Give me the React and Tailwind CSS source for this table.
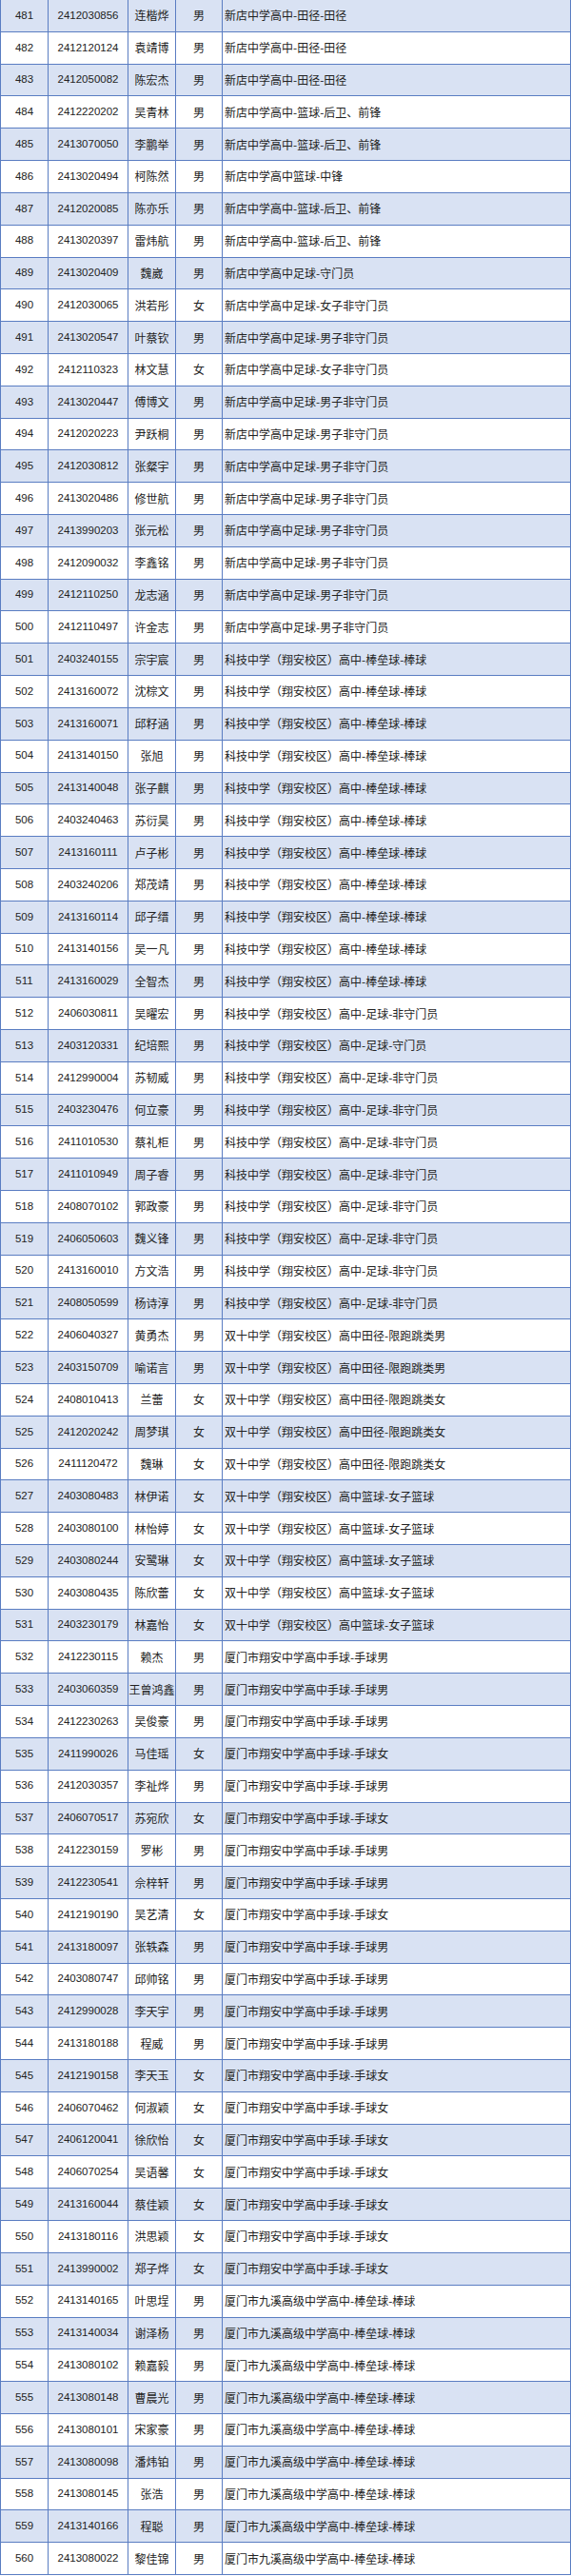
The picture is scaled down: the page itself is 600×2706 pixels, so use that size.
import React from 'react';

const raw = `481|2412030856|连楷烨|男|新店中学高中-田径-田径
482|2412120124|袁靖博|男|新店中学高中-田径-田径
483|2412050082|陈宏杰|男|新店中学高中-田径-田径
484|2412220202|吴青林|男|新店中学高中-篮球-后卫、前锋
485|2413070050|李鹏举|男|新店中学高中-篮球-后卫、前锋
486|2413020494|柯陈然|男|新店中学高中篮球-中锋
487|2412020085|陈亦乐|男|新店中学高中-篮球-后卫、前锋
488|2413020397|雷炜航|男|新店中学高中-篮球-后卫、前锋
489|2413020409|魏崴|男|新店中学高中足球-守门员
490|2412030065|洪若彤|女|新店中学高中足球-女子非守门员
491|2413020547|叶蔡钦|男|新店中学高中足球-男子非守门员
492|2412110323|林文慧|女|新店中学高中足球-女子非守门员
493|2413020447|傅博文|男|新店中学高中足球-男子非守门员
494|2412020223|尹跃桐|男|新店中学高中足球-男子非守门员
495|2412030812|张粲宇|男|新店中学高中足球-男子非守门员
496|2413020486|修世航|男|新店中学高中足球-男子非守门员
497|2413990203|张元松|男|新店中学高中足球-男子非守门员
498|2412090032|李鑫铭|男|新店中学高中足球-男子非守门员
499|2412110250|龙志涵|男|新店中学高中足球-男子非守门员
500|2412110497|许金志|男|新店中学高中足球-男子非守门员
501|2403240155|宗宇宸|男|科技中学（翔安校区）高中-棒垒球-棒球
502|2413160072|沈棕文|男|科技中学（翔安校区）高中-棒垒球-棒球
503|2413160071|邱籽涵|男|科技中学（翔安校区）高中-棒垒球-棒球
504|2413140150|张旭|男|科技中学（翔安校区）高中-棒垒球-棒球
505|2413140048|张子麒|男|科技中学（翔安校区）高中-棒垒球-棒球
506|2403240463|苏衍昊|男|科技中学（翔安校区）高中-棒垒球-棒球
507|2413160111|卢子彬|男|科技中学（翔安校区）高中-棒垒球-棒球
508|2403240206|郑茂靖|男|科技中学（翔安校区）高中-棒垒球-棒球
509|2413160114|邱子缙|男|科技中学（翔安校区）高中-棒垒球-棒球
510|2413140156|吴一凡|男|科技中学（翔安校区）高中-棒垒球-棒球
511|2413160029|全智杰|男|科技中学（翔安校区）高中-棒垒球-棒球
512|2406030811|吴曜宏|男|科技中学（翔安校区）高中-足球-非守门员
513|2403120331|纪培熙|男|科技中学（翔安校区）高中-足球-守门员
514|2412990004|苏韧威|男|科技中学（翔安校区）高中-足球-非守门员
515|2403230476|何立豪|男|科技中学（翔安校区）高中-足球-非守门员
516|2411010530|蔡礼柜|男|科技中学（翔安校区）高中-足球-非守门员
517|2411010949|周子睿|男|科技中学（翔安校区）高中-足球-非守门员
518|2408070102|郭政豪|男|科技中学（翔安校区）高中-足球-非守门员
519|2406050603|魏义锋|男|科技中学（翔安校区）高中-足球-非守门员
520|2413160010|方文浩|男|科技中学（翔安校区）高中-足球-非守门员
521|2408050599|杨诗淳|男|科技中学（翔安校区）高中-足球-非守门员
522|2406040327|黄勇杰|男|双十中学（翔安校区）高中田径-限跑跳类男
523|2403150709|喻诺言|男|双十中学（翔安校区）高中田径-限跑跳类男
524|2408010413|兰蕾|女|双十中学（翔安校区）高中田径-限跑跳类女
525|2412020242|周梦琪|女|双十中学（翔安校区）高中田径-限跑跳类女
526|2411120472|魏琳|女|双十中学（翔安校区）高中田径-限跑跳类女
527|2403080483|林伊诺|女|双十中学（翔安校区）高中篮球-女子篮球
528|2403080100|林怡婷|女|双十中学（翔安校区）高中篮球-女子篮球
529|2403080244|安鹭琳|女|双十中学（翔安校区）高中篮球-女子篮球
530|2403080435|陈欣蕾|女|双十中学（翔安校区）高中篮球-女子篮球
531|2403230179|林嘉怡|女|双十中学（翔安校区）高中篮球-女子篮球
532|2412230115|赖杰|男|厦门市翔安中学高中手球-手球男
533|2403060359|王曾鸿鑫|男|厦门市翔安中学高中手球-手球男
534|2412230263|吴俊豪|男|厦门市翔安中学高中手球-手球男
535|2411990026|马佳瑶|女|厦门市翔安中学高中手球-手球女
536|2412030357|李祉烨|男|厦门市翔安中学高中手球-手球男
537|2406070517|苏宛欣|女|厦门市翔安中学高中手球-手球女
538|2412230159|罗彬|男|厦门市翔安中学高中手球-手球男
539|2412230541|佘梓轩|男|厦门市翔安中学高中手球-手球男
540|2412190190|吴艺清|女|厦门市翔安中学高中手球-手球女
541|2413180097|张轶森|男|厦门市翔安中学高中手球-手球男
542|2403080747|邱帅铭|男|厦门市翔安中学高中手球-手球男
543|2412990028|李天宇|男|厦门市翔安中学高中手球-手球男
544|2413180188|程威|男|厦门市翔安中学高中手球-手球男
545|2412190158|李天玉|女|厦门市翔安中学高中手球-手球女
546|2406070462|何淑颖|女|厦门市翔安中学高中手球-手球女
547|2406120041|徐欣怡|女|厦门市翔安中学高中手球-手球女
548|2406070254|吴语馨|女|厦门市翔安中学高中手球-手球女
549|2413160044|蔡佳颖|女|厦门市翔安中学高中手球-手球女
550|2413180116|洪思颖|女|厦门市翔安中学高中手球-手球女
551|2413990002|郑子烨|女|厦门市翔安中学高中手球-手球女
552|2413140165|叶思埕|男|厦门市九溪高级中学高中-棒垒球-棒球
553|2413140034|谢泽杨|男|厦门市九溪高级中学高中-棒垒球-棒球
554|2413080102|赖嘉毅|男|厦门市九溪高级中学高中-棒垒球-棒球
555|2413080148|曹晨光|男|厦门市九溪高级中学高中-棒垒球-棒球
556|2413080101|宋家豪|男|厦门市九溪高级中学高中-棒垒球-棒球
557|2413080098|潘炜铂|男|厦门市九溪高级中学高中-棒垒球-棒球
558|2413080145|张浩|男|厦门市九溪高级中学高中-棒垒球-棒球
559|2413140166|程聪|男|厦门市九溪高级中学高中-棒垒球-棒球
560|2413080022|黎佳锦|男|厦门市九溪高级中学高中-棒垒球-棒球`;

const rows = raw.split('\n').map((line) => line.split('|'));

const cell = 'flex items-center border-r border-b border-[#5a7dc2]';
const num = "font-['Liberation_Sans',sans-serif] text-[11.5px]";

export default function App() {
  return (
    <div className="w-[600px] border-l border-[#5a7dc2] text-[#222] font-['Noto_Sans_CJK_SC',sans-serif] text-[12px]">
      {rows.map(([no, id, name, sex, item], i) => (
        <div
          key={no}
          className={`grid grid-cols-[50px_84px_50px_49px_1fr] h-[33.825px] ${i % 2 === 0 ? 'bg-[#d9e2f3]' : 'bg-white'}`}
        >
          <div className={`${cell} ${num} justify-center`}>{no}</div>
          <div className={`${cell} ${num} justify-center`}>{id}</div>
          <div className={`${cell} justify-center whitespace-nowrap`}>{name}</div>
          <div className={`${cell} justify-center border-r-[1.5px]`}>{sex}</div>
          <div className={`${cell} pl-[2px] whitespace-nowrap`}>{item}</div>
        </div>
      ))}
    </div>
  );
}
